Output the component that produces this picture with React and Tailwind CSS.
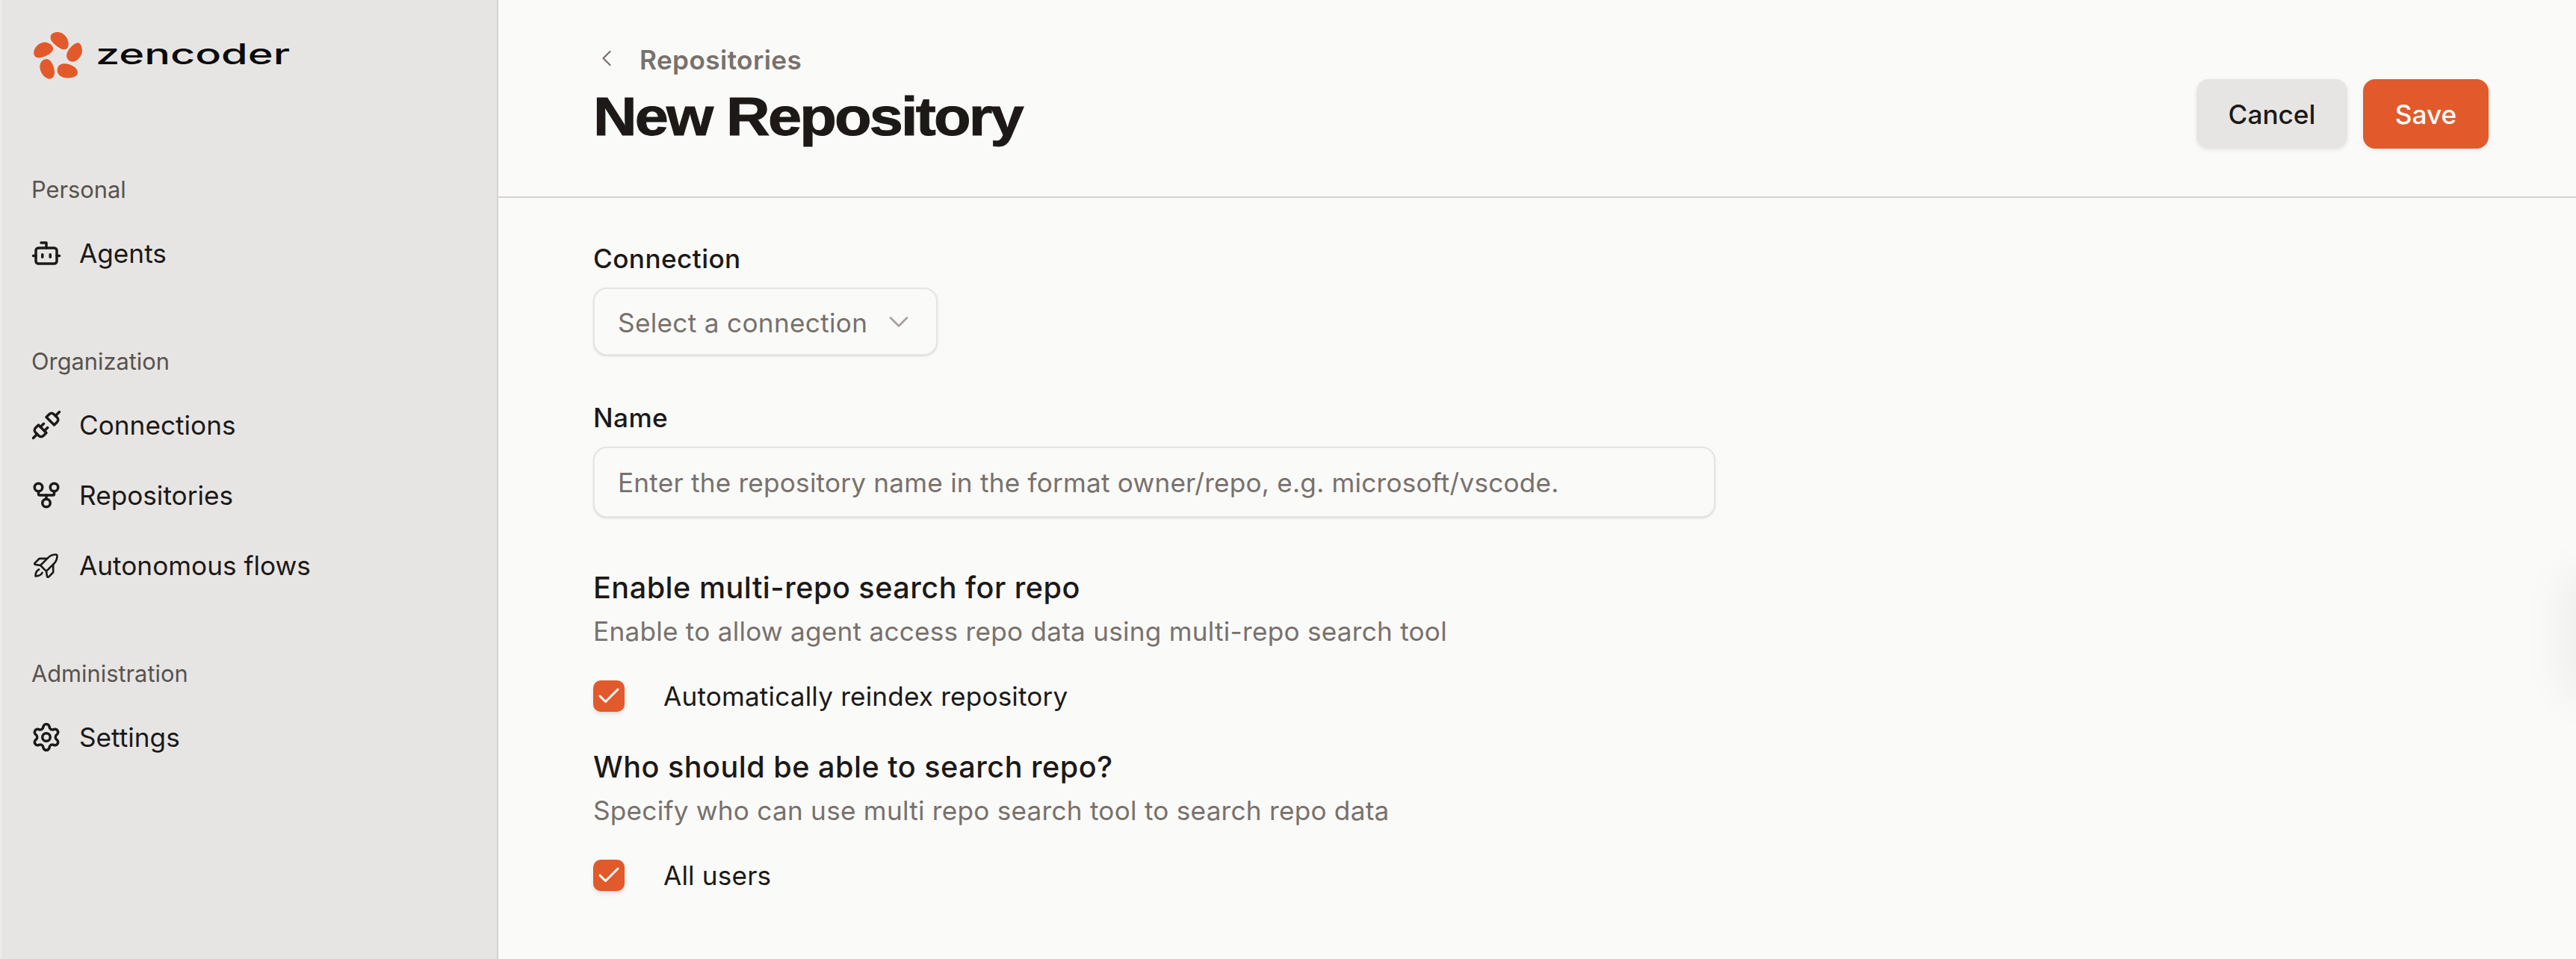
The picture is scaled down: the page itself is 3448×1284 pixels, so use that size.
import { Bot, Check, ChevronDown, ChevronLeft, GitFork, Settings, Unplug } from 'lucide-react';
import { PiRocketLaunch } from 'react-icons/pi';

const inter = 'font-["Inter",sans-serif]';

function Logo() {
    return (
        <svg width="350" height="63" viewBox="0 0 350 63" fill="none">
            <g transform="scale(0.3333) translate(-75 -70)" fill="#e25a2b">
                <path d="M143 88C145 72 170 65 190 75C208 84 220 110 213 130C208 142 195 142 182 135C160 122 140 105 143 88Z" />
                <path d="M250 113C262 110 270 128 270 145C270 165 250 190 230 189C213 188 205 172 208 158C213 140 232 118 250 113Z" />
                <path d="M76 148C80 125 105 108 125 111C145 114 158 130 152 143C145 160 110 175 92 173C80 172 74 160 76 148Z" />
                <path d="M100 205C102 188 115 176 130 178C148 182 160 215 159 235C158 250 148 258 138 258C118 256 98 230 100 205Z" />
                <path d="M170 220C172 203 185 195 205 197C228 200 252 215 252 232C252 248 230 256 205 254C185 252 168 240 170 220Z" />
            </g>
            <text
                x="83"
                y="43"
                textLength="260"
                lengthAdjust="spacingAndGlyphs"
                fontFamily="Inter, sans-serif"
                fontSize="38"
                fontWeight="500"
                fill="#0a0a0a"
            >
                zencoder
            </text>
        </svg>
    );
}

function NavItem({ icon, label }) {
    return (
        <div className="flex h-[94px] items-center gap-[23px] pl-[39px] text-[35.2px] text-[#1c1917]">
            <span className="flex w-[42px] shrink-0 items-center justify-center">{icon}</span>
            {label}
        </div>
    );
}

function NavLabel({ children }) {
    return <div className="flex h-[76px] items-center pl-[40px] text-[30.8px] text-[#57534e]">{children}</div>;
}

function Sidebar() {
    return (
        <aside className="flex h-[1284px] w-[667px] shrink-0 flex-col border-r-2 border-l-2 border-r-[#d6d3d1] border-l-[#eeedec] bg-[#e7e5e4]">
            <div className="h-[216px] pt-[43px] pl-[43px]">
                <Logo />
            </div>
            <NavLabel>Personal</NavLabel>
            <NavItem icon={<Bot size={42} strokeWidth={2} />} label="Agents" />
            <div className="mt-[60px]">
                <NavLabel>Organization</NavLabel>
                <NavItem icon={<Unplug size={42} strokeWidth={2} />} label="Connections" />
                <NavItem icon={<GitFork size={42} strokeWidth={2} />} label="Repositories" />
                <NavItem icon={<PiRocketLaunch size={50} />} label="Autonomous flows" />
            </div>
            <div className="mt-[60px]">
                <NavLabel>Administration</NavLabel>
                <NavItem icon={<Settings size={42} strokeWidth={2} />} label="Settings" />
            </div>
        </aside>
    );
}

function Field({ label, children }) {
    return (
        <div>
            <div className="flex h-[44px] items-center pb-[2px] text-[35.2px] font-medium tracking-[0.4px] text-[#1c1917]">{label}</div>
            <div className="mt-[16px]">{children}</div>
        </div>
    );
}

function CheckRow({ label }) {
    return (
        <label className="flex h-[42px] items-center gap-[52px] text-[35.2px] tracking-[0.15px] text-[#1c1917]">
            <span className="flex h-[42px] w-[42px] shrink-0 items-center justify-center rounded-[10px] bg-[#e25a2b] text-white shadow-md">
                <Check size={36} strokeWidth={2} />
            </span>
            {label}
        </label>
    );
}

function Section({ title, hint }) {
    return (
        <div>
            <div className="flex h-[48px] items-center text-[39.6px] font-medium tracking-[0.5px] text-[#1c1917]">{title}</div>
            <div className="mt-[11px] flex h-[44px] items-center text-[35.2px] tracking-[0.23px] text-[#78716c]">{hint}</div>
        </div>
    );
}

export default function App() {
    return (
        <div className={`relative flex h-[1284px] w-[3448px] overflow-hidden bg-[#fafaf9] ${inter}`}>
            <Sidebar />
            <main className="flex-1">
                <header className="flex h-[265px] justify-between border-b-2 border-[#d6d3d1] pr-[117px] pl-[127px]">
                    <div className="pt-[58px]">
                        <div className="flex h-[44px] items-center gap-[26px] text-[35.2px] font-semibold tracking-[0.4px] text-[#78716c]">
                            <ChevronLeft size={36} strokeWidth={1.5} className="-mt-[4px]" />
                            Repositories
                        </div>
                        <h1 className='mt-[10px] origin-left scale-x-[1.127] font-["Liberation_Sans",sans-serif] text-[72px] leading-[88px] font-bold tracking-[-2.5px] text-[#1c1917] [-webkit-text-stroke:1px_#1c1917]'>
                            New Repository
                        </h1>
                    </div>
                    <div className="mt-[106px] flex h-[93px] gap-[21px] text-[35.2px] font-medium">
                        <button className="w-[202px] rounded-[16px] bg-[#e7e5e4] pt-[1px] text-[#1c1917] shadow-[0_2px_6px_rgba(0,0,0,0.08)]">Cancel</button>
                        <button className="w-[168px] rounded-[16px] bg-[#e25a2b] pt-[1px] text-white shadow-[0_2px_6px_rgba(0,0,0,0.08)]">Save</button>
                    </div>
                </header>

                <div className="pt-[60px] pl-[127px]">
                    <Field label="Connection">
                        <div className="flex h-[91px] w-[461px] items-center justify-between rounded-[18px] border-2 border-[#e7e5e4] bg-[#fafaf9] pt-[3px] pr-[28px] pl-[31px] text-[35.2px] tracking-[0.3px] text-[#78716c] shadow-sm">
                            Select a connection
                            <ChevronDown size={44} strokeWidth={1.5} className="-mt-[3px] text-[#a8a29e]" />
                        </div>
                    </Field>
                    <div className="mt-[62px]">
                        <Field label="Name">
                            <input
                                className="h-[95px] w-[1502px] rounded-[18px] border-2 border-[#e7e5e4] bg-[#fafaf9] px-[31px] text-[35.2px] tracking-[0.2px] shadow-sm outline-none placeholder:text-[#78716c]"
                                placeholder="Enter the repository name in the format owner/repo, e.g. microsoft/vscode."
                            />
                        </Field>
                    </div>
                    <div className="mt-[71px]">
                        <Section title="Enable multi-repo search for repo" hint="Enable to allow agent access repo data using multi-repo search tool" />
                    </div>
                    <div className="mt-[44px]">
                        <CheckRow label="Automatically reindex repository" />
                    </div>
                    <div className="mt-[51px]">
                        <Section title="Who should be able to search repo?" hint="Specify who can use multi repo search tool to search repo data" />
                    </div>
                    <div className="mt-[44px]">
                        <CheckRow label="All users" />
                    </div>
                </div>
            </main>
            <div className="absolute top-[780px] right-[-40px] h-[140px] w-[40px] rounded-full shadow-[0_0_60px_20px_rgba(0,0,0,0.05)]" />
        </div>
    );
}
